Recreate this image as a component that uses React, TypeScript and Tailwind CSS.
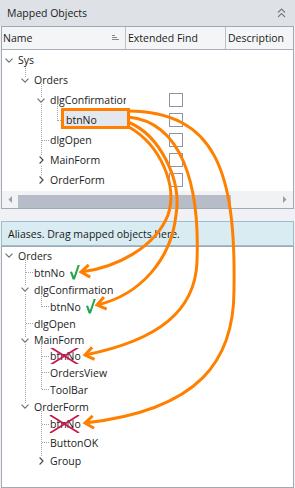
import React from "react";

type Exp = "open" | "closed" | null;
type Row = {
  level: number;
  label: string;
  exp: Exp;
  cb?: boolean;
  mark?: "check" | "cross";
};

const INDENT = ["w-0", "w-[16px]", "w-[32px]", "w-[48px]"];
const HCLS: Record<number, string> = {
  16: "h-[16px]",
  17: "h-[17px]",
  18: "h-[18px]",
  19: "h-[19px]",
  20: "h-[20px]",
};

const upperRows: Row[] = [
  { level: 0, label: "Sys", exp: "open" },
  { level: 1, label: "Orders", exp: "open" },
  { level: 2, label: "dlgConfirmation", exp: "open", cb: true },
  { level: 3, label: "btnNo", exp: null, cb: true },
  { level: 2, label: "dlgOpen", exp: null, cb: true },
  { level: 2, label: "MainForm", exp: "closed", cb: true },
  { level: 2, label: "OrderForm", exp: "closed", cb: true },
];
const upperHeights = [20, 20, 20, 20, 20, 20, 20];

const lowerRows: Row[] = [
  { level: 0, label: "Orders", exp: "open" },
  { level: 1, label: "btnNo", exp: null, mark: "check" },
  { level: 1, label: "dlgConfirmation", exp: "open" },
  { level: 2, label: "btnNo", exp: null, mark: "check" },
  { level: 1, label: "dlgOpen", exp: null },
  { level: 1, label: "MainForm", exp: "open" },
  { level: 2, label: "btnNo", exp: null, mark: "cross" },
  { level: 2, label: "OrdersView", exp: null },
  { level: 2, label: "ToolBar", exp: null },
  { level: 1, label: "OrderForm", exp: "open" },
  { level: 2, label: "btnNo", exp: null, mark: "cross" },
  { level: 2, label: "ButtonOK", exp: null },
  { level: 2, label: "Group", exp: "closed" },
];
const lowerHeights = [17, 17, 17, 17, 17, 16, 16, 17, 17, 17, 18, 19, 17];

function Chevron({ open }: { open: boolean }) {
  return open ? (
    <span className="flex items-center justify-center bg-white w-[9px] h-[7px]">
      <svg width="8" height="5" viewBox="0 0 8 5">
        <path d="M0.5 0.6 L4 4.1 L7.5 0.6" fill="none" stroke="#6e6e6e" strokeWidth="1.1" />
      </svg>
    </span>
  ) : (
    <span className="flex items-center justify-center bg-white w-[7px] h-[9px]">
      <svg width="5" height="8" viewBox="0 0 5 8">
        <path d="M0.6 0.5 L4.1 4 L0.6 7.5" fill="none" stroke="#444" strokeWidth="1.1" />
      </svg>
    </span>
  );
}

function TreeLines({ rows, heights, width }: { rows: Row[]; heights: number[]; width: number }) {
  const centers: number[] = [];
  let y = 0;
  heights.forEach((h) => {
    centers.push(y + h / 2);
    y += h;
  });
  const segs: string[] = [];
  rows.forEach((r, i) => {
    if (r.exp === "open") {
      let last = -1;
      for (let j = i + 1; j < rows.length && rows[j].level > r.level; j++) {
        if (rows[j].level === r.level + 1) last = j;
      }
      if (last > 0) {
        const x = 16 * (r.level + 1) + 7.5;
        segs.push(`M${x},${Math.round(centers[i]) + 4} V${Math.floor(centers[last]) + 1}`);
      }
    }
    if (r.level > 0 && r.exp === null) {
      const yy = Math.floor(centers[i]) + 0.5;
      segs.push(`M${16 * r.level + 8},${yy} H${16 * r.level + 15}`);
    }
  });
  return (
    <svg className="absolute left-0 top-0" width={width} height={y}>
      <path
        d={segs.join(" ")}
        stroke="#a3a3a3"
        strokeWidth="1"
        strokeDasharray="1 1"
        fill="none"
        shapeRendering="crispEdges"
      />
    </svg>
  );
}

function Check() {
  return (
    <svg width="10" height="15" viewBox="0 0 10 15" className="ml-[5px] shrink-0">
      <polygon points="0,7 2,6.4 3.9,11.2 7.7,0 9.8,0 4.9,14.6 2.7,14.6" fill="#1ea84a" />
    </svg>
  );
}

function Cross() {
  return (
    <svg
      width="32"
      height="21"
      viewBox="0 0 32 21"
      className="absolute left-[-1px] top-1/2 -translate-y-1/2"
    >
      <path d="M1 1.5 L30 19.5 M1 19.5 L30 1.5" stroke="#c9184f" strokeWidth="1.8" fill="none" />
    </svg>
  );
}

function TreeRow({ r, h, children }: { r: Row; h: number; children?: React.ReactNode }) {
  return (
    <div className={`relative flex ${HCLS[h]}`}>
      <div className="w-[124px] shrink-0 flex items-center overflow-hidden">
        <div className={`${INDENT[r.level]} shrink-0`} />
        <div className="w-[14px] shrink-0 flex justify-center items-center">
          {r.exp ? <Chevron open={r.exp === "open"} /> : null}
        </div>
        <span className="ml-[2px] whitespace-nowrap relative flex items-center">
          {r.label}
          {r.mark === "cross" ? <Cross /> : null}
        </span>
        {r.mark === "check" ? <Check /> : null}
      </div>
      {children}
    </div>
  );
}

function arrowHead(tip: [number, number], from: [number, number], len = 10.5, angDeg = 36) {
  const dx = tip[0] - from[0];
  const dy = tip[1] - from[1];
  const L = Math.hypot(dx, dy);
  const bx = -dx / L;
  const by = -dy / L;
  const a = (angDeg * Math.PI) / 180;
  const rot = (s: number) => {
    const c = Math.cos(s * a);
    const sn = Math.sin(s * a);
    return [tip[0] + len * (bx * c - by * sn), tip[1] + len * (bx * sn + by * c)];
  };
  const p1 = rot(1);
  const p2 = rot(-1);
  return `M${p1[0].toFixed(1)},${p1[1].toFixed(1)} L${tip[0]},${tip[1]} L${p2[0].toFixed(1)},${p2[1].toFixed(1)}`;
}

const curves: { d: string; tip: [number, number]; from: [number, number] }[] = [
  { d: "M128,111 C215,112 236,170 234,290 C234,360 200,410 85,423", tip: [85, 423], from: [200, 410] },
  { d: "M128,117 C182,122 200,185 197,262 C195,310 160,340 85,355", tip: [85, 355], from: [160, 340] },
  { d: "M128,122 C160,135 182,180 176,215 C171,260 140,295 97,305", tip: [97, 305], from: [140, 295] },
  { d: "M129,127 C160,145 178,185 168,215 C155,248 115,268 81,272", tip: [81, 272], from: [115, 268] },
];

function Arrows() {
  return (
    <svg
      className="absolute left-0 top-0 pointer-events-none"
      width="295"
      height="488"
      viewBox="0 0 295 488"
    >
      {curves.map((c, i) => (
        <g key={i} fill="none" stroke="#ff8000" strokeWidth="3">
          <path d={c.d} />
          <path d={arrowHead(c.tip, c.from)} strokeLinejoin="miter" />
        </g>
      ))}
    </svg>
  );
}

function CheckBox() {
  return <div className="w-[14px] h-[14px] border border-[#8d95a2] bg-white" />;
}

export default function App() {
  return (
    <div className="relative w-[295px] h-[488px] overflow-hidden bg-[#eff1f4] text-[10.5px] leading-[14px] text-[#1b1b1b] font-[family-name:'Open_Sans',sans-serif]">
      {/* title bar */}
      <div className="h-[26px] bg-[#dee2e7] flex items-center justify-between pl-[7px] pr-[9px]">
        <span className="text-[10.5px]">Mapped Objects</span>
        <svg width="9" height="10" viewBox="0 0 9 10">
          <path d="M1 4.5 L4.5 1 L8 4.5 M1 9 L4.5 5.5 L8 9" fill="none" stroke="#7a7a7a" strokeWidth="1.1" />
        </svg>
      </div>

      {/* mapped objects grid */}
      <div className="ml-[1px] w-[293px] h-[183px] border border-[#a2a9b4] bg-white flex flex-col">
        <div className="h-[23px] shrink-0 flex bg-[#f4f5f7] border-b border-[#aab0ba]">
          <div className="w-[124px] border-r border-[#bcc1c9] flex items-center pl-[1px] pr-[6px]">
            <span className="flex-1">Name</span>
            <svg width="7" height="6" viewBox="0 0 7 6">
              <path d="M0 0.5 H3 M0 2.5 H5 M0 4.5 H7" stroke="#8a8a8a" strokeWidth="1" shapeRendering="crispEdges" />
            </svg>
          </div>
          <div className="w-[100px] border-r border-[#bcc1c9] flex items-center pl-[2px]">Extended Find</div>
          <div className="flex-1 flex items-center pl-[2px]">Description</div>
        </div>

        <div className="relative h-[141px] shrink-0">
          <TreeLines rows={upperRows} heights={upperHeights} width={124} />
          <div className="absolute left-[59px] top-[58px] w-[69px] h-[21px] border-[3px] border-[#ff8000] bg-[#e4e8ee]" />
          {upperRows.map((r, i) => (
            <TreeRow key={i} r={r} h={upperHeights[i]}>
              <div className="w-[99px] shrink-0 flex items-center justify-center">
                {r.cb ? <CheckBox /> : null}
              </div>
            </TreeRow>
          ))}
        </div>

        <div className="h-[17px] shrink-0 flex bg-[#f1f2f4]">
          <div className="w-[16px] flex items-center justify-center">
            <svg width="4" height="7" viewBox="0 0 4 7">
              <path d="M4 0 L0.5 3.5 L4 7 Z" fill="#9a9ea6" />
            </svg>
          </div>
          <div className="w-[213px] flex flex-col justify-end">
            <div className="h-[13px] bg-[#b6bcc8]" />
          </div>
          <div className="flex-1" />
          <div className="w-[16px] flex items-center justify-center">
            <svg width="4" height="7" viewBox="0 0 4 7">
              <path d="M0 0 L3.5 3.5 L0 7 Z" fill="#9a9ea6" />
            </svg>
          </div>
        </div>
      </div>

      {/* aliases hint */}
      <div className="mt-[12px] ml-[1px] w-[293px] h-[25px] border border-[#9dbccc] bg-[#d8ecf1] flex items-center pl-[6px]">
        Aliases. Drag mapped objects here.
      </div>

      {/* aliases tree */}
      <div className="ml-[1px] w-[293px] h-[242px] border border-[#a2a9b4] bg-white">
        <div className="relative">
          <TreeLines rows={lowerRows} heights={lowerHeights} width={124} />
          {lowerRows.map((r, i) => (
            <TreeRow key={i} r={r} h={lowerHeights[i]} />
          ))}
        </div>
      </div>

      <Arrows />
    </div>
  );
}
